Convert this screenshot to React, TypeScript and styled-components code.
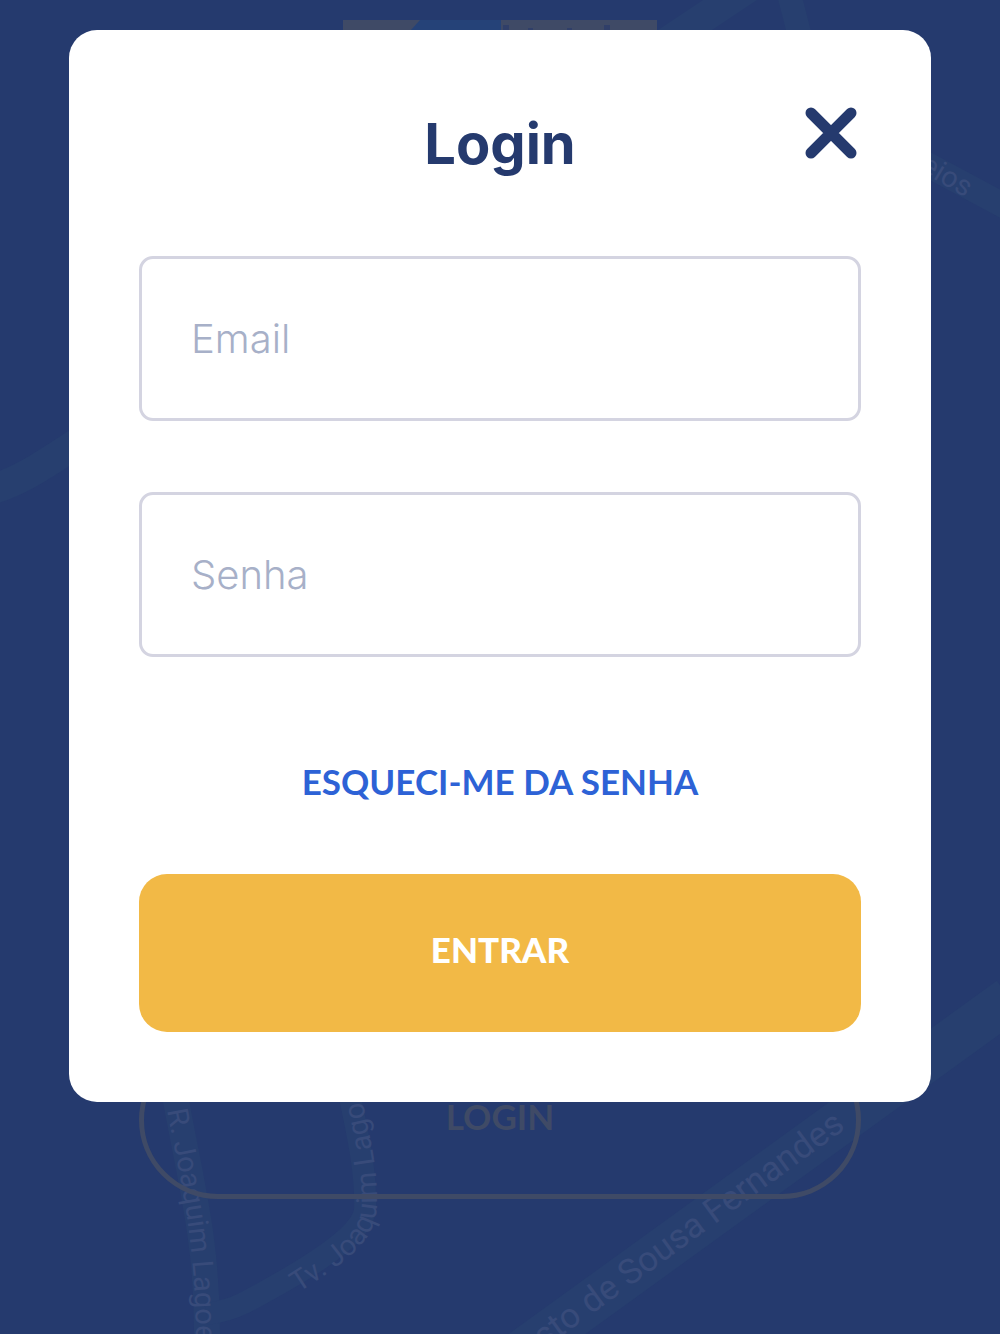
import React from "react";
import styled, { createGlobalStyle } from "styled-components";

const navy = "#253a6e";
const road = "#273f6f";
const streetName = "#384b7a";
const muted = "#3f4a66";

const GlobalStyle = createGlobalStyle`
  * {
    box-sizing: border-box;
  }
  body {
    margin: 0;
    background: ${navy};
    font-family: Lato, "Liberation Sans", sans-serif;
  }
  button,
  input {
    font: inherit;
  }
`;

const Screen = styled.main`
  display: grid;
  position: relative;
  min-height: 100vh;
  overflow: hidden;
  background: ${navy};
`;

const StreetMap = styled.svg`
  position: absolute;
  inset: 0;
  width: 100%;
  height: 100%;

  path {
    fill: none;
  }
`;

const StreetName = styled.text<{ $size?: number }>`
  fill: ${streetName};
  font-family: Roboto, sans-serif;
  font-size: ${({ $size = 29 }) => $size}px;
`;

const Welcome = styled.section`
  grid-area: 1 / 1;
  z-index: 0;
  display: flex;
  flex-direction: column;
  align-items: center;
  justify-content: space-between;
  padding: 20px 139px 135px;
`;

const Logo = styled.svg`
  width: 314px;
  height: 60px;
`;

const OutlineButton = styled.button`
  width: 100%;
  height: 158px;
  padding: 0 0 8px;
  border: 5px solid ${muted};
  border-radius: 79px;
  background: transparent;
  color: ${muted};
  font-size: 35px;
  font-weight: 700;
`;

const Overlay = styled.div`
  grid-area: 1 / 1;
  z-index: 1;
  padding: 30px 69px;
`;

const Card = styled.section`
  padding: 70px;
  border-radius: 28px;
  background: #fff;
`;

const Header = styled.header`
  display: grid;
  grid-template-columns: 1fr auto 1fr;
  align-items: start;
  height: 156px;
`;

const Title = styled.h1`
  grid-column: 2;
  margin: 0;
  color: ${navy};
  font-family: Inter, "Liberation Sans", sans-serif;
  font-size: 56px;
  font-weight: 700;
  line-height: 88px;
`;

const CloseButton = styled.button`
  display: grid;
  place-items: center;
  justify-self: end;
  width: 60px;
  height: 66px;
  padding: 0;
  border: 0;
  background: transparent;
  color: ${navy};
`;

const Form = styled.form`
  display: flex;
  flex-direction: column;
`;

const Fields = styled.div`
  display: grid;
  gap: 71px;
`;

const Field = styled.input`
  width: 100%;
  height: 165px;
  padding: 0 49px;
  border: 3px solid #d4d4e1;
  border-radius: 14px;
  background: #fff;
  color: ${navy};
  font-family: Inter, "Liberation Sans", sans-serif;
  font-size: 40px;
  font-weight: 300;

  &::placeholder {
    color: #a7b0c8;
    opacity: 1;
  }
`;

const ForgotLink = styled.a`
  align-self: center;
  margin: 102px 0 71px;
  color: #2d62d6;
  font-size: 35px;
  font-weight: 700;
  line-height: 44px;
  text-decoration: none;
`;

const SubmitButton = styled.button`
  height: 158px;
  padding: 0 0 8px;
  border: 0;
  border-radius: 28px;
  background: #f2b946;
  color: #fff;
  font-size: 35px;
  font-weight: 900;
`;

function Streets() {
  return (
    <StreetMap viewBox="0 0 1000 1334" preserveAspectRatio="xMidYMid slice" aria-hidden="true">
      <g stroke={road}>
        <path d="M-10 490 C25 480 50 460 90 435" strokeWidth="30" />
        <path d="M640 60 L760 -20" strokeWidth="30" />
        <path d="M788 -10 L806 60" strokeWidth="24" />
        <path d="M900 150 L1010 209" strokeWidth="25" />
        <path d="M500 1368 L1010 999" strokeWidth="45" />
        <path d="M174 1090 C190 1180 208 1240 207 1340" strokeWidth="26" />
        <path d="M346 1080 C362 1150 366 1180 365 1210 C362 1236 310 1268 244 1303 Q228 1311 206 1314" strokeWidth="22" />
      </g>
      <defs>
        <path id="lagoeiro" d="M167 1110 C182 1190 196 1240 196 1350" />
        <path id="travessa" d="M298 1293 C350 1259 378 1241 377 1200 C377 1160 368 1130 359 1084" />
        <path id="fernandes" d="M544 1349 L870 1111" />
        <path id="correios" d="M919 170 L999 218" />
      </defs>
      <StreetName>
        <textPath href="#lagoeiro">R. Joaquim Lagoe</textPath>
      </StreetName>
      <StreetName>
        <textPath href="#travessa">Tv. Joaquim Lago</textPath>
      </StreetName>
      <StreetName $size={35}>
        <textPath href="#fernandes">sto de Sousa Fernandes</textPath>
      </StreetName>
      <StreetName>
        <textPath href="#correios">eios</textPath>
      </StreetName>
    </StreetMap>
  );
}

export default function App() {
  return (
    <>
      <GlobalStyle />
      <Screen>
        <Streets />
        <Welcome>
          <Logo viewBox="0 0 314 60" aria-hidden="true">
            <path d="M0 0H314V60H0Z" fill={muted} />
            <path d="M77 0H158V60H46L68 10Z" fill="#254278" />
            <path d="M160 5h6v55h-6ZM261 5h6v55h-6ZM185 8h5v52h-5ZM224 8h5v52h-5Z" fill="#303f69" />
          </Logo>
          <OutlineButton type="button" tabIndex={-1}>
            LOGIN
          </OutlineButton>
        </Welcome>
        <Overlay>
          <Card role="dialog" aria-modal="true" aria-labelledby="login-title">
            <Header>
              <Title id="login-title">Login</Title>
              <CloseButton type="button" aria-label="Fechar">
                <svg width="52" height="52" viewBox="0 0 52 52" aria-hidden="true">
                  <path d="M6 6 46 46M46 6 6 46" stroke="currentColor" strokeWidth="11" strokeLinecap="round" />
                </svg>
              </CloseButton>
            </Header>
            <Form onSubmit={(event) => event.preventDefault()}>
              <Fields>
                <Field type="email" placeholder="Email" aria-label="Email" />
                <Field type="password" placeholder="Senha" aria-label="Senha" />
              </Fields>
              <ForgotLink href="#senha">ESQUECI-ME DA SENHA</ForgotLink>
              <SubmitButton type="submit">ENTRAR</SubmitButton>
            </Form>
          </Card>
        </Overlay>
      </Screen>
    </>
  );
}
